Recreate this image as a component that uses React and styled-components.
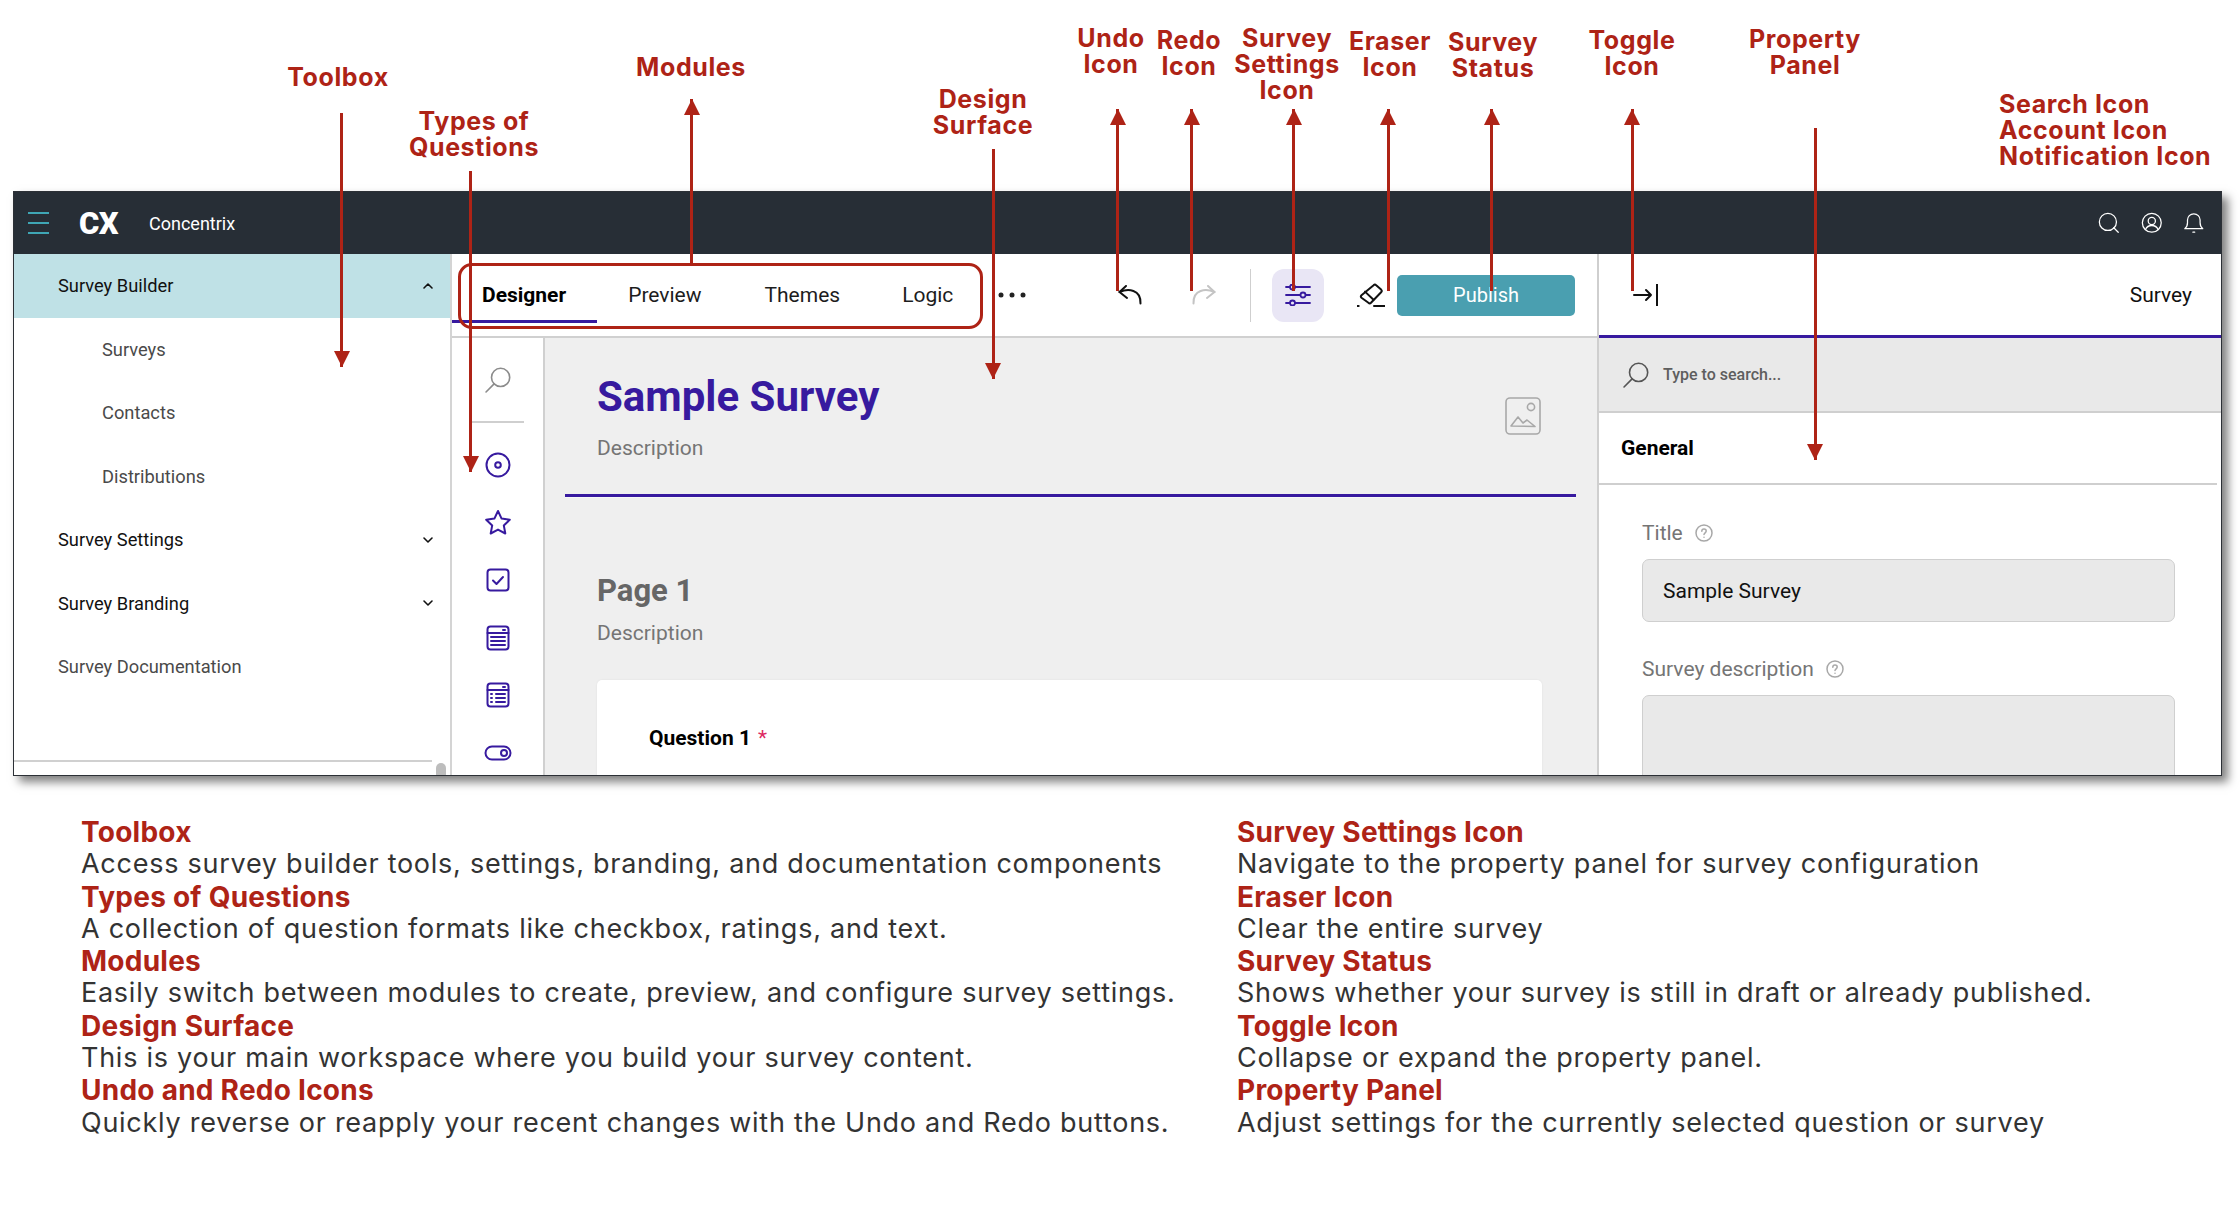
import styled, { createGlobalStyle } from "styled-components";

const RED = "#ae2316";
const INDIGO = "#371a9f";

const GlobalStyle = createGlobalStyle`
  html, body { margin: 0; padding: 0; background: #fff; }
  * { box-sizing: border-box; }
  body { font-family: Roboto, "Liberation Sans", sans-serif; }
`;

const Page = styled.div`
  position: relative;
  width: 2240px;
  height: 1218px;
  overflow: hidden;
  padding: 191px 0 0 13px;
`;

const Frame = styled.div`
  width: 2209px;
  height: 585px;
  display: flex;
  flex-direction: column;
  border: 1px solid #2c3036;
  overflow: hidden;
  box-shadow: 6px 6px 9px rgba(0, 0, 0, 0.5);
  background: #fff;
`;

const Header = styled.header`
  flex: none;
  height: 62px;
  background: #272e36;
  display: flex;
  align-items: center;
  padding: 0 16px 0 14px;
  color: #fff;
`;

const Burger = styled.div`
  width: 21px;
  height: 22px;
  display: flex;
  flex-direction: column;
  justify-content: space-between;
  span {
    display: block;
    height: 2px;
    background: #3fa6b5;
  }
`;

const Logo = styled.div`
  margin-left: 30px;
  font-size: 31px;
  font-weight: 900;
  letter-spacing: -0.5px;
  width: 70px;
`;

const Brand = styled.div`
  font-size: 18px;
`;

const HeaderIcons = styled.div`
  margin-left: auto;
  display: flex;
  align-items: center;
  gap: 21px;
`;

const Body = styled.div`
  flex: 1;
  min-height: 0;
  display: flex;
`;

const Sidebar = styled.aside`
  position: relative;
  flex: none;
  width: 438px;
  border-right: 2px solid #d4d4d4;
`;

const NavRow = styled.div`
  height: 63.5px;
  display: flex;
  align-items: center;
  justify-content: space-between;
  padding: 0 16px 0 ${(p) => (p.$sub ? "88px" : "44px")};
  font-size: 18.3px;
  color: ${(p) => (p.$strong ? "#111" : "#4a4a4a")};
  background: ${(p) => (p.$active ? "#bfe1e6" : "transparent")};
`;

const ScrollTrack = styled.div`
  position: absolute;
  left: 0;
  right: 18px;
  bottom: 0;
  height: 15px;
  border-top: 2px solid #d0d0d0;
`;

const ScrollThumb = styled.div`
  position: absolute;
  right: 4px;
  bottom: -4px;
  width: 10px;
  height: 16px;
  border-radius: 5px;
  background: #bdbdbd;
`;

const Main = styled.main`
  flex: none;
  width: 1147px;
  display: flex;
  flex-direction: column;
  border-right: 2px solid #cfcfcf;
`;

const Toolbar = styled.div`
  flex: none;
  height: 84px;
  display: flex;
  align-items: center;
  padding: 0 22px 0 30px;
  border-bottom: 2px solid #d0d0d0;
`;

const Tab = styled.div`
  position: relative;
  font-size: 21px;
  margin-right: ${(p) => p.$gap || 0}px;
  font-weight: ${(p) => (p.$active ? 700 : 400)};
  color: ${(p) => (p.$active ? "#000" : "#1d1d1d")};
  ${(p) =>
    p.$active &&
    `&::after {
      content: "";
      position: absolute;
      left: -30px;
      width: 145px;
      top: 37px;
      height: 3px;
      background: ${INDIGO};
    }`}
`;

const ToolGroup = styled.div`
  margin-left: auto;
  display: flex;
  align-items: center;
`;

const ToolIcon = styled.div`
  display: flex;
  align-items: center;
  justify-content: center;
  margin-left: ${(p) => p.$ml || 0}px;
`;

const VRule = styled.div`
  width: 1px;
  height: 53px;
  background: #cfcfcf;
  margin-left: ${(p) => p.$ml}px;
`;

const SettingsBtn = styled.div`
  width: 52px;
  height: 53px;
  border-radius: 12px;
  background: #e9e6f5;
  display: flex;
  align-items: center;
  justify-content: center;
  margin-left: ${(p) => p.$ml}px;
`;

const Publish = styled.button`
  width: 178px;
  height: 41px;
  margin-left: ${(p) => p.$ml}px;
  border: 0;
  border-radius: 5px;
  background: #4a9fb0;
  color: #fff;
  font: 400 20px Roboto, sans-serif;
`;

const Work = styled.div`
  flex: 1;
  min-height: 0;
  display: flex;
`;

const QuestionTypes = styled.div`
  flex: none;
  width: 93px;
  border-right: 2px solid #d0d0d0;
  display: flex;
  flex-direction: column;
  align-items: center;
`;

const ToolSearch = styled.div`
  width: 52px;
  height: 85px;
  margin: 0 0 13px 1px;
  flex: none;
  border-bottom: 2px solid #cfcfcf;
  display: flex;
  align-items: center;
  justify-content: center;
`;

const TypeIcon = styled.div`
  flex: none;
  height: 57.6px;
  display: flex;
  align-items: center;
  justify-content: center;
`;

const Canvas = styled.div`
  flex: 1;
  min-width: 0;
  background: #efefef;
  overflow: hidden;
`;

const SurveyHead = styled.div`
  margin: 0 21px 0 20px;
  height: 159px;
  padding: 36px 35px 0 32px;
  display: flex;
  justify-content: space-between;
  border-bottom: 3px solid ${INDIGO};
  box-shadow: 0 1px 0 #f7f7f7;
`;

const SurveyTitle = styled.h1`
  margin: 0;
  font-size: 42px;
  line-height: 46px;
  font-weight: 700;
  color: ${INDIGO};
`;

const Muted = styled.div`
  font-size: 21px;
  line-height: 24px;
  color: #757575;
  margin-top: ${(p) => p.$mt}px;
`;

const ImageSlot = styled.div`
  align-self: center;
  margin-top: -32px;
`;

const PageBlock = styled.div`
  margin-left: 52px;
  width: 945px;
`;

const PageTitle = styled.h2`
  margin: 74px 0 0;
  font-size: 31px;
  line-height: 40px;
  font-weight: 700;
  color: #666;
`;

const QuestionCard = styled.div`
  margin-top: 35px;
  height: 120px;
  padding: 46px 0 0 52px;
  background: #fff;
  border-radius: 5px;
  box-shadow: 0 0 2px rgba(0, 0, 0, 0.08);
  font-size: 21px;
  line-height: 24px;
  font-weight: 700;
  color: #000;
  em {
    font-style: normal;
    font-weight: 400;
    color: #dd2a62;
    margin-left: 7px;
  }
`;

const Panel = styled.section`
  flex: 1;
  min-width: 0;
  display: flex;
  flex-direction: column;
`;

const PanelBar = styled.div`
  flex: none;
  height: 84px;
  border-bottom: 3px solid ${INDIGO};
  display: flex;
  align-items: center;
  justify-content: space-between;
  padding: 0 29px 0 34px;
  font-size: 21px;
  color: #111;
`;

const PanelSearch = styled.div`
  flex: none;
  height: 75px;
  background: #e9e9e9;
  border-bottom: 2px solid #cfcfcf;
  display: flex;
  align-items: center;
  gap: 14px;
  padding: 0 0 0 24px;
  font-size: 16px;
  font-weight: 500;
  color: #5e5e5e;
`;

const SectionHead = styled.div`
  flex: none;
  height: 72px;
  margin-right: 4px;
  display: flex;
  align-items: center;
  padding-left: 22px;
  border-bottom: 2px solid #cfcfcf;
  font-size: 21px;
  font-weight: 700;
  color: #000;
`;

const Fields = styled.div`
  padding: 35px 46px 0 43px;
`;

const FieldLabel = styled.div`
  display: flex;
  align-items: center;
  gap: 12px;
  font-size: 21px;
  line-height: 26px;
  color: #757575;
  margin-top: ${(p) => p.$mt || 0}px;
`;

const FieldBox = styled.div`
  margin-top: 13px;
  height: ${(p) => p.$h}px;
  background: #e9e9e9;
  border: 1.5px solid #cfcfcf;
  border-radius: 7px;
  display: flex;
  align-items: center;
  padding-left: 20px;
  font-size: 21px;
  color: #111;
`;

/* callouts drawn over the screenshot */

const Callout = styled.div`
  position: absolute;
  z-index: 5;
  top: ${(p) => p.$top}px;
  left: ${(p) => p.$x}px;
  transform: ${(p) => (p.$flush ? "none" : "translateX(-50%)")};
  text-align: ${(p) => (p.$flush ? "left" : "center")};
  white-space: nowrap;
  font-family: Inter, "Liberation Sans", sans-serif;
  font-size: 25px;
  line-height: 26px;
  font-weight: 700;
  letter-spacing: 0.6px;
  color: ${RED};
`;

const Arrow = styled.div`
  position: absolute;
  z-index: 5;
  left: ${(p) => p.$x - 1.5}px;
  top: ${(p) => p.$from}px;
  height: ${(p) => p.$to - p.$from}px;
  width: 3px;
  background: ${RED};
  &::after {
    content: "";
    position: absolute;
    left: -6.5px;
    ${(p) => (p.$up ? "top: 0;" : "bottom: 0;")}
    border-left: 8px solid transparent;
    border-right: 8px solid transparent;
    ${(p) =>
      p.$up
        ? `border-bottom: 16px solid ${RED};`
        : `border-top: 16px solid ${RED};`}
  }
`;

const ModulesBox = styled.div`
  position: absolute;
  z-index: 4;
  left: 458px;
  top: 263px;
  width: 525px;
  height: 66px;
  border: 3.5px solid ${RED};
  border-radius: 14px;
`;

const Notes = styled.div`
  display: grid;
  grid-template-columns: 1156px 1fr;
  margin: 40px 0 0 68px;
`;

const NoteColumn = styled.div`
  font-family: Inter, "Liberation Sans", sans-serif;
  line-height: 32.3px;
`;

const NoteHead = styled.div`
  font-size: 28px;
  font-weight: 700;
  letter-spacing: 0.25px;
  color: ${RED};
`;

const NoteText = styled.div`
  font-size: 27px;
  font-weight: 400;
  letter-spacing: 0.74px;
  color: #333;
  white-space: nowrap;
`;

const Svg = ({ w, h, children, color = "currentColor", sw = 2, scale = 1 }) => (
  <svg
    width={w * scale}
    height={h * scale}
    viewBox={`0 0 ${w} ${h}`}
    fill="none"
    stroke={color}
    strokeWidth={sw}
    strokeLinecap="round"
    strokeLinejoin="round"
  >
    {children}
  </svg>
);

const ChevronUp = () => (
  <Svg w={12} h={8} color="#111" sw={1.6}>
    <path d="M2 6l4-4 4 4" />
  </Svg>
);

const ChevronDown = () => (
  <Svg w={12} h={8} color="#111" sw={1.6}>
    <path d="M2 2l4 4 4-4" />
  </Svg>
);

const Lens = ({ color, size = 26 }) => (
  <Svg w={size} h={size} color={color} sw={1.6}>
    <circle cx={size * 0.6} cy={size * 0.4} r={size * 0.35} />
    <path d={`M${size * 0.35} ${size * 0.65}L${size * 0.04} ${size * 0.96}`} />
  </Svg>
);

const SOURCES = [
  ["Toolbox", "Access survey builder tools, settings, branding, and documentation components"],
  ["Types of Questions", "A collection of question formats like checkbox, ratings, and text."],
  ["Modules", "Easily switch between modules to create, preview, and configure survey settings."],
  ["Design Surface", "This is your main workspace where you build your survey content."],
  ["Undo and Redo Icons", "Quickly reverse or reapply your recent changes with the Undo and Redo buttons."],
];

const SOURCES_RIGHT = [
  ["Survey Settings Icon", "Navigate to the property panel for survey configuration"],
  ["Eraser Icon", "Clear the entire survey"],
  ["Survey Status", "Shows whether your survey is still in draft or already published."],
  ["Toggle Icon", "Collapse or expand the property panel."],
  ["Property Panel", "Adjust settings for the currently selected question or survey"],
];

const CALLOUTS = [
  { x: 338, top: 64, lines: ["Toolbox"] },
  { x: 474, top: 108, lines: ["Types of", "Questions"] },
  { x: 691, top: 54, lines: ["Modules"] },
  { x: 983, top: 86, lines: ["Design", "Surface"] },
  { x: 1111, top: 25, lines: ["Undo", "Icon"] },
  { x: 1189, top: 27, lines: ["Redo", "Icon"] },
  { x: 1287, top: 25, lines: ["Survey", "Settings", "Icon"] },
  { x: 1390, top: 28, lines: ["Eraser", "Icon"] },
  { x: 1493, top: 29, lines: ["Survey", "Status"] },
  { x: 1632, top: 27, lines: ["Toggle", "Icon"] },
  { x: 1805, top: 26, lines: ["Property", "Panel"] },
  { x: 1999, top: 91, flush: true, lines: ["Search Icon", "Account Icon", "Notification Icon"] },
];

const ARROWS = [
  { x: 341.5, from: 113, to: 367 },
  { x: 470.5, from: 171, to: 472 },
  { x: 691.5, from: 99, to: 263, up: true },
  { x: 993, from: 149, to: 379 },
  { x: 1117.5, from: 109, to: 291, up: true },
  { x: 1191.5, from: 109, to: 291, up: true },
  { x: 1293.5, from: 109, to: 291, up: true },
  { x: 1388, from: 109, to: 291, up: true },
  { x: 1491.5, from: 109, to: 291, up: true },
  { x: 1632, from: 109, to: 291, up: true },
  { x: 1815, from: 128, to: 460 },
];

const HelpDot = () => (
  <Svg w={18} h={18} color="#a8a8a8" sw={1.5}>
    <circle cx="9" cy="9" r="8" />
    <path d="M6.8 7.2c0-3 4.4-2.8 4.4-.2 0 1.8-2.2 1.8-2.2 3.6" />
    <path d="M9 13.2v.1" />
  </Svg>
);

export default function App() {
  return (
    <Page>
      <GlobalStyle />
      <Frame>
        <Header>
          <Burger>
            <span />
            <span />
            <span />
          </Burger>
          <Logo>CX</Logo>
          <Brand>Concentrix</Brand>
          <HeaderIcons>
            <Svg w={24} h={24} color="#fff" sw={1.4} scale={0.9}>
              <circle cx="11" cy="11" r="9.5" />
              <path d="M17.5 17.5l5 5" />
            </Svg>
            <Svg w={24} h={24} color="#fff" sw={1.4} scale={0.9}>
              <circle cx="12" cy="12" r="10.5" />
              <circle cx="12" cy="10" r="4" />
              <path d="M5 19.5c1.5-3.5 4-4.5 7-4.5s5.5 1 7 4.5" />
            </Svg>
            <Svg w={24} h={24} color="#fff" sw={1.4} scale={0.9}>
              <path d="M2 18.5c2-1.5 3-2.5 3-6.5V9c0-4 3-7 7-7s7 3 7 7v3c0 4 1 5 3 6.5z" />
              <path d="M11 22.5h2" />
            </Svg>
          </HeaderIcons>
        </Header>
        <Body>
          <Sidebar>
            <NavRow $active $strong>
              Survey Builder <ChevronUp />
            </NavRow>
            <NavRow $sub>Surveys</NavRow>
            <NavRow $sub>Contacts</NavRow>
            <NavRow $sub>Distributions</NavRow>
            <NavRow $strong>
              Survey Settings <ChevronDown />
            </NavRow>
            <NavRow $strong>
              Survey Branding <ChevronDown />
            </NavRow>
            <NavRow>Survey Documentation</NavRow>
            <ScrollTrack />
            <ScrollThumb />
          </Sidebar>
          <Main>
            <Toolbar>
              <Tab $active $gap={62}>Designer</Tab>
              <Tab $gap={63}>Preview</Tab>
              <Tab $gap={62}>Themes</Tab>
              <Tab>Logic</Tab>
              <ToolGroup>
                <ToolIcon>
                  <Svg w={28} h={6} color="#222" sw={0}>
                    <circle cx="3" cy="3" r="2.5" fill="#222" />
                    <circle cx="14" cy="3" r="2.5" fill="#222" />
                    <circle cx="25" cy="3" r="2.5" fill="#222" />
                  </Svg>
                </ToolIcon>
                <ToolIcon $ml={92}>
                  <Svg w={24} h={20} color="#111" sw={2}>
                    <path d="M8 1L1.5 7 9 13" />
                    <path d="M1.5 7C10 3.5 23 4 22.5 18.5" />
                  </Svg>
                </ToolIcon>
                <ToolIcon $ml={50}>
                  <Svg w={24} h={20} color="#c4c4c4" sw={2}>
                    <path d="M16 1l6.5 6L15 13" />
                    <path d="M22.5 7C14 3.5 1 4 1.5 18.5" />
                  </Svg>
                </ToolIcon>
                <VRule $ml={34} />
                <SettingsBtn $ml={21}>
                  <Svg w={26} h={22} color={INDIGO} sw={1.8}>
                    <path d="M1 3h4M10 3h15M1 11h14M21 11h4M1 19h4M10 19h15" />
                    <circle cx="7.5" cy="3" r="2.5" />
                    <circle cx="18" cy="11" r="2.5" />
                    <circle cx="7.5" cy="19" r="2.5" />
                  </Svg>
                </SettingsBtn>
                <ToolIcon $ml={33}>
                  <Svg w={28} h={24} color="#111" sw={2}>
                    <path d="M16.6 2.2c.8-.8 1.8-.8 2.6 0l4.9 4.4c.8.8.8 1.8 0 2.6L14 19.8c-.8.8-1.8.8-2.6 0l-6.9-5c-.8-.8-.8-1.8 0-2.6z" />
                    <path d="M8 8.6l8.5 8.2" />
                    <path d="M.5 23h1.2M17 23h10.5" />
                  </Svg>
                </ToolIcon>
                <Publish $ml={12}>Publish</Publish>
              </ToolGroup>
            </Toolbar>
            <Work>
              <QuestionTypes>
                <ToolSearch>
                  <Lens color="#8c8c8c" />
                </ToolSearch>
                <TypeIcon>
                  <Svg w={26} h={26} color={INDIGO}>
                    <circle cx="13" cy="13" r="11.5" />
                    <circle cx="13" cy="13" r="2.8" />
                  </Svg>
                </TypeIcon>
                <TypeIcon>
                  <Svg w={28} h={26} color={INDIGO}>
                    <path d="M14 2l3.6 7.6 8.2 1.1-6 5.7 1.5 8.1L14 20.6l-7.3 3.9 1.5-8.1-6-5.7 8.2-1.1z" />
                  </Svg>
                </TypeIcon>
                <TypeIcon>
                  <Svg w={24} h={24} color={INDIGO}>
                    <rect x="1.5" y="1.5" width="21" height="21" rx="3" />
                    <path d="M7 12.5l3.5 3.5 6.5-7" />
                  </Svg>
                </TypeIcon>
                <TypeIcon>
                  <Svg w={24} h={26} color={INDIGO}>
                    <rect x="1.5" y="1.5" width="21" height="23" rx="3" />
                    <path d="M1.5 8h21M5 12h14M5 16h14M5 20h14M17 5h2" />
                  </Svg>
                </TypeIcon>
                <TypeIcon>
                  <Svg w={24} h={26} color={INDIGO}>
                    <rect x="1.5" y="1.5" width="21" height="23" rx="3" />
                    <path d="M1.5 8h21M10 12h9M10 16h9M10 20h9M5 12h1M5 16h1M5 20h1M17 5h2" />
                  </Svg>
                </TypeIcon>
                <TypeIcon>
                  <Svg w={28} h={16} color={INDIGO}>
                    <rect x="1.5" y="1.5" width="25" height="13" rx="6.5" />
                    <circle cx="20" cy="8" r="3" />
                  </Svg>
                </TypeIcon>
              </QuestionTypes>
              <Canvas>
                <SurveyHead>
                  <div>
                    <SurveyTitle>Sample Survey</SurveyTitle>
                    <Muted $mt={16}>Description</Muted>
                  </div>
                  <ImageSlot>
                    <Svg w={36} h={38} color="#a8a8a8" sw={1.6}>
                      <rect x="1" y="1" width="34" height="36" rx="4" />
                      <circle cx="26" cy="10" r="3.6" />
                      <path d="M6 29l7-9 5 6 4-3 8 6.5z" />
                    </Svg>
                  </ImageSlot>
                </SurveyHead>
                <PageBlock>
                  <PageTitle>Page 1</PageTitle>
                  <Muted $mt={10}>Description</Muted>
                  <QuestionCard>
                    Question 1<em>*</em>
                  </QuestionCard>
                </PageBlock>
              </Canvas>
            </Work>
          </Main>
          <Panel>
            <PanelBar>
              <Svg w={26} h={24} color="#111" sw={2}>
                <path d="M1 12h17M13 7l5 5-5 5" />
                <path d="M24 1v22" strokeLinecap="butt" />
              </Svg>
              Survey
            </PanelBar>
            <PanelSearch>
              <Lens color="#555" />
              Type to search...
            </PanelSearch>
            <SectionHead>General</SectionHead>
            <Fields>
              <FieldLabel>
                Title <HelpDot />
              </FieldLabel>
              <FieldBox $h={63}>Sample Survey</FieldBox>
              <FieldLabel $mt={34}>
                Survey description <HelpDot />
              </FieldLabel>
              <FieldBox $h={140} />
            </Fields>
          </Panel>
        </Body>
      </Frame>

      <Notes>
        <NoteColumn>
          {SOURCES.map(([head, text]) => (
            <div key={head}>
              <NoteHead>{head}</NoteHead>
              <NoteText>{text}</NoteText>
            </div>
          ))}
        </NoteColumn>
        <NoteColumn>
          {SOURCES_RIGHT.map(([head, text]) => (
            <div key={head}>
              <NoteHead>{head}</NoteHead>
              <NoteText>{text}</NoteText>
            </div>
          ))}
        </NoteColumn>
      </Notes>

      <ModulesBox />
      {ARROWS.map((a) => (
        <Arrow key={a.x} $x={a.x} $from={a.from} $to={a.to} $up={a.up} />
      ))}
      {CALLOUTS.map((c) => (
        <Callout key={c.lines[0] + c.x} $x={c.x} $top={c.top} $flush={c.flush}>
          {c.lines.map((line) => (
            <div key={line}>{line}</div>
          ))}
        </Callout>
      ))}
    </Page>
  );
}
